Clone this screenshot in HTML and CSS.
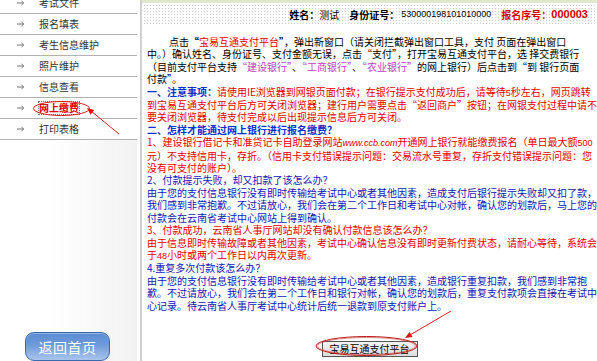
FILE: index.html
```html
<!DOCTYPE html>
<html lang="zh-CN">
<head>
<meta charset="utf-8">
<title>网上缴费</title>
<link rel="stylesheet" href="styles.css">
</head>
<body>
<div class="page">
  <aside class="sidebar">
    <ul class="menu">
      <li class="menu-item"><svg class="arrow" width="8" height="6" viewBox="0 0 8 6"><path d="M0 3H6.5M4.5 1L6.8 3L4.5 5" fill="none" stroke="#777" stroke-width="1"/></svg><a>考试文件</a></li>
      <li class="menu-item"><svg class="arrow" width="8" height="6" viewBox="0 0 8 6"><path d="M0 3H6.5M4.5 1L6.8 3L4.5 5" fill="none" stroke="#777" stroke-width="1"/></svg><a>报名填表</a></li>
      <li class="menu-item"><svg class="arrow" width="8" height="6" viewBox="0 0 8 6"><path d="M0 3H6.5M4.5 1L6.8 3L4.5 5" fill="none" stroke="#777" stroke-width="1"/></svg><a>考生信息维护</a></li>
      <li class="menu-item"><svg class="arrow" width="8" height="6" viewBox="0 0 8 6"><path d="M0 3H6.5M4.5 1L6.8 3L4.5 5" fill="none" stroke="#777" stroke-width="1"/></svg><a>照片维护</a></li>
      <li class="menu-item"><svg class="arrow" width="8" height="6" viewBox="0 0 8 6"><path d="M0 3H6.5M4.5 1L6.8 3L4.5 5" fill="none" stroke="#777" stroke-width="1"/></svg><a>信息查看</a></li>
      <li class="menu-item active"><svg class="arrow" width="8" height="6" viewBox="0 0 8 6"><path d="M0 3H6.5M4.5 1L6.8 3L4.5 5" fill="none" stroke="#777" stroke-width="1"/></svg><a>网上缴费</a></li>
      <li class="menu-item"><svg class="arrow" width="8" height="6" viewBox="0 0 8 6"><path d="M0 3H6.5M4.5 1L6.8 3L4.5 5" fill="none" stroke="#777" stroke-width="1"/></svg><a>打印表格</a></li>
    </ul>
    <div class="home-wrap"><a class="home-btn">返回首页</a></div>
  </aside>

  <main class="main">
    <div class="topbar"></div>
    <div class="info">
      <span class="info-item"><b>姓名：</b>测试</span>
      <span class="info-item"><b>身份证号：</b><span class="num">530000198101010000</span></span>
      <span class="info-item serial"><b>报名序号：</b><span class="num-b">000003</span></span>
    </div>

    <div class="content">
      <p class="intro">点击<b>“</b><span class="red">宝易互通支付平台</span><b>”</b>，弹出新窗口（请关闭拦截弹出窗口工具，支付 页面在弹出窗口<br>中。）确认姓名、身份证号、支付金额无误，点击“支付”，打开宝易互通支付平台，选 择交费银行<br>（目前支付平台支持<span class="purple">“建设银行”</span>、<span class="purple">“工商银行”</span>、<span class="purple">“农业银行”</span>的网上银行）后点击到“到 银行页面<br>付款”。</p>
      <p class="red"><span class="title">一、注意事项：</span>请使用IE浏览器到网银页面付款；在银行提示支付成功后，请等待<span class="lat">5</span>秒左右，网页跳转<br>到宝易互通支付平台后方可关闭浏览器；建行用户需要点击“返回商户”按钮；在网银支付过程中请不<br>要关闭浏览器，待支付完成以后出现提示信息后方可关闭。</p>
      <p class="title">二、怎样才能通过网上银行进行报名缴费？</p>
      <p class="red">1、建设银行借记卡和准贷记卡自助登录网站<span class="url">www.ccb.com</span>开通网上银行就能缴费报名（单日最大额<span class="lat">500</span><br>元）不支持信用卡，存折。（信用卡支付错误提示问题：交易流水号重复，存折支付错误提示问题：您<br>没有可支付的账户）。</p>
      <p class="blue">2、付款提示失败，却又扣款了该怎么办？<br>由于您的支付信息银行没有即时传输给考试中心或者其他因素，造成支付后银行提示失败却又扣了款，<br>我们感到非常抱歉。不过请放心，我们会在第二个工作日和考试中心对帐，确认您的划款后，马上您的<br>付款会在云南省考试中心网站上得到确认。</p>
      <p class="red">3、付款成功，云南省人事厅网站却没有确认付款信息该怎么办？<br>由于信息即时传输故障或者其他因素，考试中心确认信息没有即时更新付费状态，请耐心等待，系统会<br>于<span class="lat">48</span>小时或两个工作日以内再次更新。</p>
      <p class="blue">4.重复多次付款该怎么办？<br>由于您的支付信息银行没有即时传输给考试中心或者其他因素，造成银行重复扣款，我们感到非常抱<br>歉。不过请放心，我们会在第二个工作日和银行对帐，确认您的划款后，重复支付款项会直接在考试中<br>心记录。待云南省人事厅考试中心统计后统一退款到原支付账户上。</p>
    </div>

    <div class="pay-wrap"><button class="pay-btn" type="button">宝易互通支付平台</button></div>
  </main>
</div>

<svg class="annot" width="597" height="361" viewBox="0 0 597 361">
  <ellipse cx="61.5" cy="108.5" rx="28" ry="7" fill="none" stroke="#d81818" stroke-width="1"/>
  <line x1="119" y1="134" x2="91" y2="111" stroke="#e02020" stroke-width="1"/>
  <polygon points="87,108 90.5,114.7 94.3,110.1" fill="#e01010"/>
  <ellipse cx="366.5" cy="346" rx="50.5" ry="9.5" fill="none" stroke="#b81818" stroke-width="1"/>
  <ellipse cx="366.5" cy="346" rx="49" ry="8.5" fill="none" stroke="#d04040" stroke-width="0.6"/>
  <line x1="451" y1="311" x2="410" y2="335" stroke="#e02020" stroke-width="1"/>
  <polygon points="405,338 412.5,337.1 409.5,331.9" fill="#e01010"/>
</svg>
</body>
</html>
```

FILE: styles.css
```css
* {
  box-sizing: border-box;
  margin: 0;
  padding: 0;
}

html, body {
  width: 597px;
  height: 361px;
  overflow: hidden;
  background: #fff;
}

body {
  position: relative;
  font-family: "Noto Sans CJK SC", "Liberation Sans", sans-serif;
  font-size: 10px;
  color: #000;
}

.page {
  display: flex;
  height: 361px;
}

/* ---------- sidebar ---------- */
.sidebar {
  width: 137px;
  flex: none;
  display: flex;
  flex-direction: column;
  background: linear-gradient(90deg, #ffffff 0%, #ffffff 35%, #f2f2f2 100%);
}

.menu {
  list-style: none;
  margin-top: -7px;
}

.menu-item {
  height: 21px;
  display: flex;
  align-items: center;
  padding-left: 17px;
  border-bottom: 1px solid #b2b2b2;
  background: #fff;
}

.arrow {
  flex: none;
  margin-right: 14px;
}

.menu-item a {
  color: #333;
  font-size: 10px;
  line-height: 12px;
}

.menu-item.active a {
  color: #e00000;
  font-weight: bold;
  outline: 1px dotted #777;
  outline-offset: 0;
}

.home-wrap {
  margin-top: auto;
  padding-left: 25px;
}

.home-btn {
  display: flex;
  align-items: center;
  justify-content: center;
  width: 85px;
  height: 29px;
  border: 1px solid #3b69b0;
  border-radius: 9px;
  background: linear-gradient(#5a8bd3 0%, #6f9bdb 45%, #a9c4ec 100%);
  color: #fff;
  font-size: 14px;
  letter-spacing: 0.5px;
  box-shadow: inset 0 1px 0 rgba(255, 255, 255, 0.35);
}

/* ---------- main ---------- */
.main {
  flex: 1;
  margin-left: 3px;
  border-left: 2px solid #d0d0d0;
  display: flex;
  flex-direction: column;
}

.topbar {
  height: 3px;
  background: #e2e8cc;
}

.info {
  height: 22px;
  display: flex;
  justify-content: flex-end;
  align-items: center;
  gap: 10px;
  padding-right: 9px;
  background-color: #fff;
  background-image:
    linear-gradient(90deg, #fff 2px, transparent 2px),
    linear-gradient(#fff 2px, #cfcfcf 2px);
  background-size: 3px 3px;
  white-space: nowrap;
}

.info-item {
  display: flex;
  align-items: center;
}

.num {
  font-family: "Liberation Sans", sans-serif;
  font-size: 9px;
  margin-left: 2px;
}

.serial {
  color: #d40000;
}

.num-b {
  font-family: "Liberation Sans", sans-serif;
  font-weight: bold;
  font-size: 11px;
}

.content {
  padding: 11px 0 0 5px;
  line-height: 12.4px;
}

.content p {
  white-space: nowrap;
}

.intro {
  text-indent: 22px;
}

.red {
  color: #e60000;
}

.blue {
  color: #1414b4;
}

.purple {
  color: #c23cc2;
}

.title {
  color: #0a2ec8;
  font-weight: bold;
}

.lat {
  font-family: "Liberation Sans", sans-serif;
  font-size: 9px;
}

.url {
  font-family: "Liberation Sans", sans-serif;
  font-size: 9px;
  font-style: italic;
}

.pay-wrap {
  display: flex;
  justify-content: center;
  padding-top: 29px;
}

.pay-btn {
  height: 16px;
  padding: 0 7px;
  border: 1px solid #555;
  background: linear-gradient(#f4f4f4, #dcdcdc);
  font-family: "Noto Sans CJK SC", sans-serif;
  font-size: 10px;
  line-height: 14px;
  color: #000;
}

/* ---------- annotations over the page ---------- */
.annot {
  position: absolute;
  top: 0;
  left: 0;
  pointer-events: none;
}
```
